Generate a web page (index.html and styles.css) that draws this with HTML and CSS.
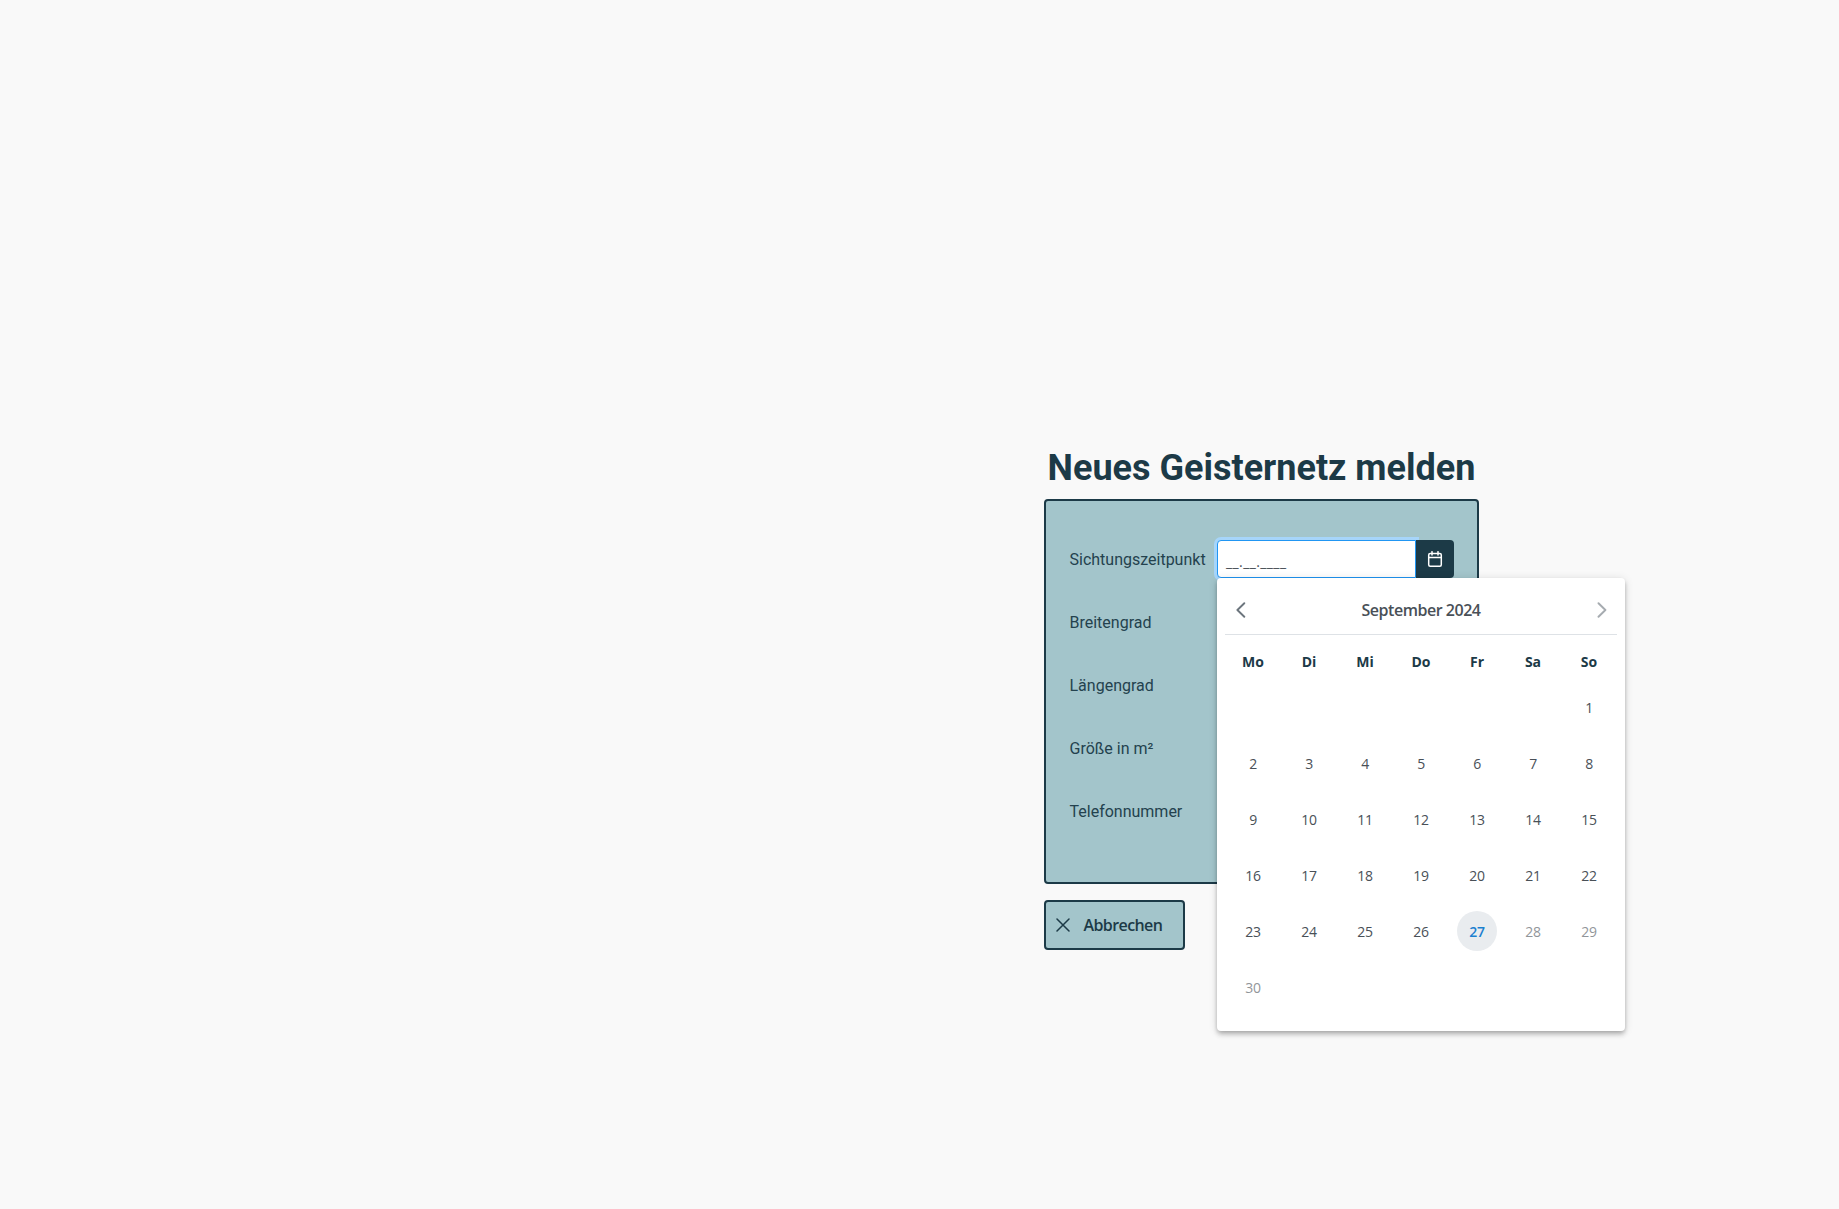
FILE: index.html
```html
<!DOCTYPE html>
<html lang="de">
<head>
<meta charset="utf-8">
<title>Neues Geisternetz melden</title>
<link rel="stylesheet" href="styles.css">
</head>
<body>
<main class="report">
  <h1 class="title">Neues Geisternetz melden</h1>
  <form class="panel">
    <div class="row">
      <label class="label">Sichtungszeitpunkt</label>
      <div class="datepicker">
        <div class="date-input"><span class="mask">__.__.____</span></div>
        <div class="trigger">
          <svg width="16" height="16" viewBox="0 0 16 16" fill="none" stroke="#fff" stroke-width="1.5" stroke-linecap="round" stroke-linejoin="round"><rect x="1.7" y="2.4" width="12.6" height="12.8" rx="1.5"/><path d="M1.7 6.6h12.6M5 .7v3.2M11 .7v3.2"/></svg>
        </div>
        <section class="calendar">
          <header class="cal-head">
            <svg width="16" height="16" viewBox="0 0 16 16" fill="none" stroke="#6c757d" stroke-width="1.9" stroke-linecap="round" stroke-linejoin="round"><path d="M11.3 1.2 4.4 8l6.9 6.8"/></svg>
            <span class="month">September 2024</span>
            <svg class="faded" width="16" height="16" viewBox="0 0 16 16" fill="none" stroke="#6c757d" stroke-width="1.9" stroke-linecap="round" stroke-linejoin="round"><path d="M5.5 1.2 12.4 8l-6.9 6.8"/></svg>
          </header>
          <div class="weekdays"><span>Mo</span><span>Di</span><span>Mi</span><span>Do</span><span>Fr</span><span>Sa</span><span>So</span></div>
          <div class="days">
            <span class="day first">1</span>
            <span class="day">2</span><span class="day">3</span><span class="day">4</span><span class="day">5</span><span class="day">6</span><span class="day">7</span><span class="day">8</span>
            <span class="day">9</span><span class="day">10</span><span class="day">11</span><span class="day">12</span><span class="day">13</span><span class="day">14</span><span class="day">15</span>
            <span class="day">16</span><span class="day">17</span><span class="day">18</span><span class="day">19</span><span class="day">20</span><span class="day">21</span><span class="day">22</span>
            <span class="day">23</span><span class="day">24</span><span class="day">25</span><span class="day">26</span><span class="day today">27</span><span class="day off">28</span><span class="day off">29</span>
            <span class="day off">30</span>
          </div>
        </section>
      </div>
    </div>
    <div class="row"><label class="label">Breitengrad</label></div>
    <div class="row"><label class="label">Längengrad</label></div>
    <div class="row"><label class="label">Größe in m²</label></div>
    <div class="row"><label class="label">Telefonnummer</label></div>
  </form>
  <button class="cancel" type="button">
    <svg width="14" height="14" viewBox="0 0 14 14" fill="none" stroke="#1c3a47" stroke-width="1.5" stroke-linecap="round"><path d="M1 1l12 12M13 1 1 13"/></svg>
    <span>Abbrechen</span>
  </button>
</main>
</body>
</html>
```

FILE: styles.css
```css
* { box-sizing: border-box; }
body {
  margin: 0;
  min-height: 1209px;
  background: #f9f9f9;
  color: #1c3a47;
  font-family: Roboto, sans-serif;
  font-size: 16px;
}
svg { display: block; flex: none; }
.report {
  width: 435px;
  margin-left: 1044px;
  padding-top: 446px;
  display: flex;
  flex-direction: column;
  align-items: flex-start;
}
.title {
  margin: 0;
  width: 100%;
  height: 53px;
  line-height: 45px;
  text-align: center;
  white-space: nowrap;
  font-size: 36px;
  font-weight: 700;
}
.panel {
  width: 100%;
  height: 385px;
  padding: 26px 23px;
  background: #a3c5cb;
  border: 2px solid #1c3a47;
  border-radius: 4px;
}
.row { display: flex; align-items: center; height: 63px; }
.label { width: 148px; flex: none; padding: 2px 0 0 .5px; white-space: nowrap; color: #23424e; }
.datepicker { display: flex; position: relative; }
.date-input {
  width: 199px;
  height: 38px;
  padding: 8px;
  background: #fff;
  border: 1px solid #2196f3;
  border-radius: 4px 0 0 4px;
  box-shadow: 0 0 0 3px #a6d5fa;
  color: #495057;
  font: 16px/24px "Open Sans", sans-serif;
}
.mask { font-size: 14px; letter-spacing: .4px; }
.trigger {
  position: relative;
  width: 38px;
  height: 38px;
  display: grid;
  place-items: center;
  background: #1c3a47;
  border-radius: 0 4px 4px 0;
}
.calendar {
  position: absolute;
  left: 0;
  top: 38px;
  z-index: 2;
  width: 408px;
  height: 453px;
  padding: 8px;
  background: #fff;
  border-radius: 4px;
  box-shadow: 0 2px 4px -1px rgba(0,0,0,.2), 0 4px 5px 0 rgba(0,0,0,.14), 0 1px 10px 0 rgba(0,0,0,.12);
  color: #495057;
  font-family: "Open Sans", sans-serif;
}
.cal-head {
  height: 49px;
  padding: 0 8px;
  display: flex;
  align-items: center;
  justify-content: space-between;
  border-bottom: 1px solid #dee2e6;
}
.month { font-weight: 600; letter-spacing: -.47px; }
.faded { opacity: .6; }
.weekdays, .days { display: grid; grid-template-columns: repeat(7, 56px); text-align: center; }
.weekdays {
  margin-top: 8px;
  height: 36px;
  line-height: 38px;
  font-size: 14px;
  font-weight: 700;
  color: #1c3a47;
}
.day {
  width: 40px;
  height: 40px;
  margin: 8px;
  line-height: 42px;
  font-size: 14px;
  letter-spacing: -.3px;
}
.first { grid-column: 7; }
.off { opacity: .6; }
.today { background: #e9ecef; border-radius: 50%; color: #1c80cf; font-weight: 600; }
.cancel {
  width: 141px;
  height: 50px;
  margin-top: 16px;
  padding: 0 9.5px;
  display: flex;
  align-items: center;
  gap: 14px;
  background: #a3c5cb;
  border: 2px solid #1c3a47;
  border-radius: 4px;
  color: #1c3a47;
  font: 600 16px "Open Sans", sans-serif;
  letter-spacing: -.6px;
}
```
